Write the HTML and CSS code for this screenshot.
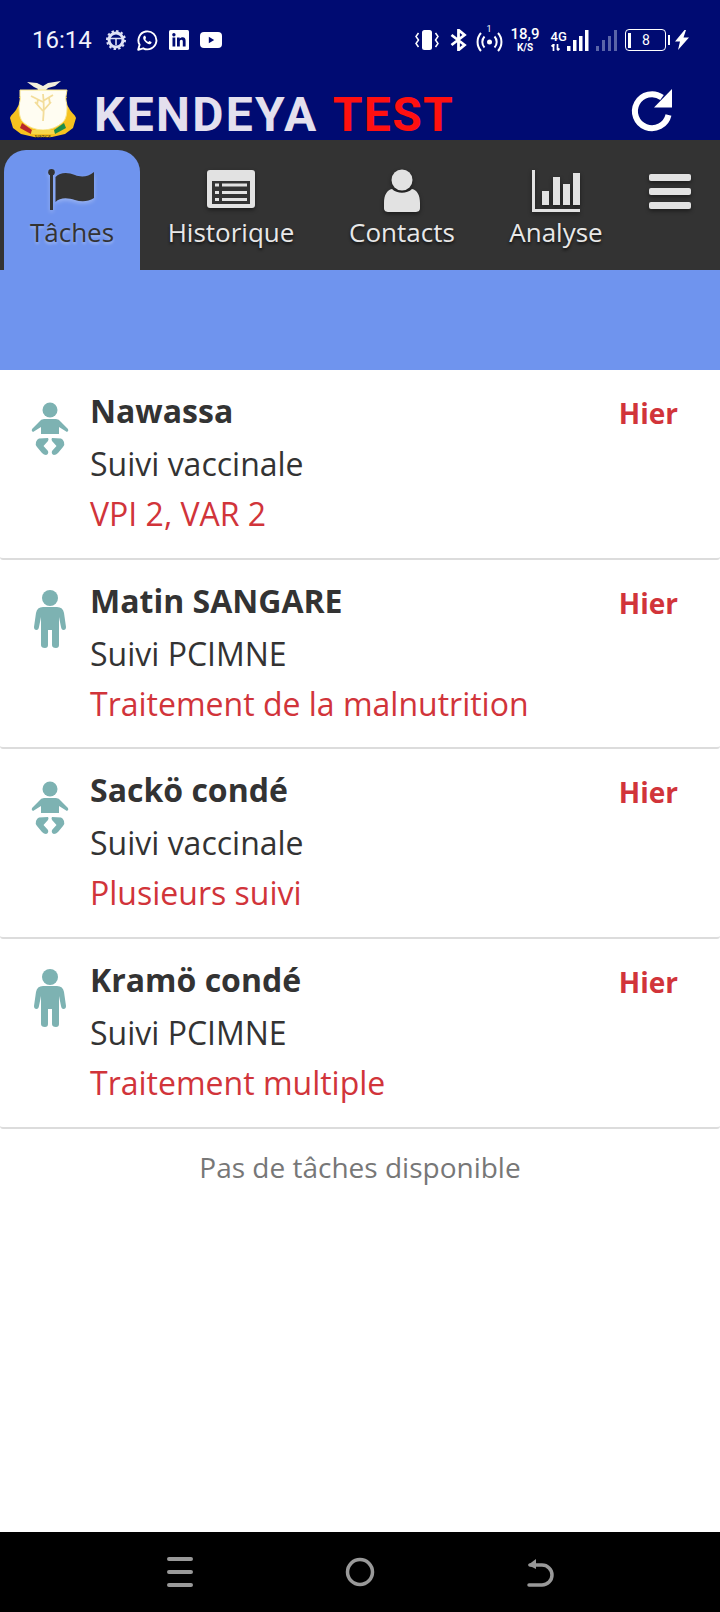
FILE: index.html
```html
<!DOCTYPE html>
<html lang="fr">
<head>
<meta charset="utf-8">
<title>Kendeya</title>
<link rel="stylesheet" href="styles.css">
</head>
<body>
<div class="app">
  <div class="status">
    <div class="status-left">
      <span class="time">16:14</span>
      <svg class="si-gear" width="20" height="20" viewBox="0 0 20 20"><circle cx="10" cy="10" r="7" fill="none" stroke="#dfe2f5" stroke-width="3"/><circle cx="10" cy="10" r="9" fill="none" stroke="#dfe2f5" stroke-width="2" stroke-dasharray="2.4 2.3"/><path d="M4 8.500h12M10 9v6" stroke="#dfe2f5" stroke-width="1.600"/></svg>
      <svg width="21" height="21" viewBox="0 0 21 21"><path d="M1.200 19.800l1.400-5a9 9 0 1 1 3.600 3.500z" fill="none" stroke="#fff" stroke-width="1.900" stroke-linejoin="round"/><path d="M7.200 5.800c-1.500 1-1.400 3 .3 5.300 1.800 2.400 4.400 3.700 6 2.900.9-.5 1.200-1.300 1-1.900l-2.200-1.100-1 1c-1.200-.3-2.600-1.700-3-3l.8-1-.9-2.200z" fill="#fff"/></svg>
      <svg width="20" height="20" viewBox="0 0 20 20"><rect width="20" height="20" rx="1.500" fill="#fff"/><path d="M3.500 7.500h2.800v9H3.500zM8 7.500h2.700v1.300c.6-1 1.700-1.500 2.900-1.500 2.300 0 3 1.500 3 3.800v5.400h-2.800v-4.800c0-1.200-.3-2-1.400-2s-1.600.8-1.600 2v4.800H8z" fill="#000b72"/><circle cx="4.900" cy="4.700" r="1.700" fill="#000b72"/></svg>
      <svg width="22" height="16" viewBox="0 0 22 16"><rect width="22" height="16" rx="4" fill="#fff"/><path d="M8.800 4.800v6.400l5.400-3.200z" fill="#000b72"/></svg>
    </div>
    <div class="status-right">
      <svg class="sr-vib" width="24" height="20" viewBox="0 0 24 20"><rect x="7" y="0" width="10" height="20" rx="2.500" fill="#fff"/><path d="M3.500 3L1 6.500l2.500 3.500L1 13.500 3.500 17M20.500 3L23 6.500 20.500 10l2.500 3.500-2.500 3.500" fill="none" stroke="#fff" stroke-width="1.500"/></svg>
      <svg class="sr-bt" width="17" height="22" viewBox="0 0 17 22"><path d="M1.500 6l13 10-6 5V1l6 5-13 10" fill="none" stroke="#fff" stroke-width="2.800"/></svg>
      <div class="sr-hs">
        <svg width="27" height="20" viewBox="0 0 27 20"><circle cx="13.500" cy="10" r="2.500" fill="#fff"/><path d="M8.500 4.500a8 8 0 0 0 0 11M18.500 4.500a8 8 0 0 1 0 11M5 1a13.500 13.500 0 0 0 0 18M22 1a13.500 13.500 0 0 1 0 18" fill="none" stroke="#fff" stroke-width="2"/></svg>
        <span class="hs-one">1</span>
      </div>
      <div class="sr-speed"><span class="sp-num">18,9</span><span class="sp-unit">K/S</span></div>
      <div class="sr-net">
        <div class="net-left"><span class="net-4g">4G</span>
          <svg width="10" height="7" viewBox="0 0 10 7"><path d="M2.500 7V1M.5 2.500L2.500.5l1 1M6.500 0v6M8.500 4.500l-2 2" fill="none" stroke="#fff" stroke-width="1.700"/></svg>
        </div>
        <svg class="bars" width="22" height="21" viewBox="0 0 22 21"><path d="M0 16h3.500v5H0zM6 10h3.500v11H6zM12 6h3.500v15H12zM18 0h3.500v21H18z" fill="#fff"/></svg>
      </div>
      <svg class="sr-sig2" width="21" height="21" viewBox="0 0 21 21"><path d="M0 16h3v5H0zM6 10h3v11H6zM12 6h3v15h-3zM18 0h3v21h-3z" fill="#5a64a8"/></svg>
      <div class="sr-batt">
        <div class="batt-body"><span class="batt-fill"></span><span class="batt-num">8</span></div>
        <span class="batt-nub"></span>
      </div>
      <svg class="sr-bolt" width="14" height="20" viewBox="0 0 14 20"><path d="M9.500 0L0 11.500h5L3 20l11-12.500H8.500L11 0z" fill="#fff"/></svg>
    </div>
  </div>

  <div class="header">
    <svg class="emblem" width="68" height="60" viewBox="0 0 68 60">
      <path d="M18 3l10 1 6 3 5-3 13-2-6 5-7 2-2 2 2 3H27l2-4-4-2z" fill="#f3efdc"/>
      <path d="M10 18c3 4 0 8-2 11-2 5-6 6-7 10l3 10 8 6 13 3h18l13-3 8-6 3-10c-1-4-5-5-7-10-2-3-5-7-2-11z" fill="#f6c21f"/>
      <path d="M11 11h47l-1 6c-1 3 1 7 1 11 0 7-1 12-4 15-5 5-13 8-20 8-7 0-15-3-20-8-3-3-4-8-4-15 0-4 2-8 1-11z" fill="#fffdf2" stroke="#f8e58a" stroke-width="1"/>
      <path d="M34 15c1 8 1 17 0 27M34 23l-12-6M34 22l10-6M34 32l-8-9M34 32l8-9M29 20l-1 6M40 19l1 6" fill="none" stroke="#f3dd9a" stroke-width="1.800"/>
      <path d="M13 44l10 7-1 4-11-6z" fill="#b8262b"/>
      <path d="M23 51h22l1 4H22z" fill="#f6d84c"/>
      <path d="M55 44l-10 7 1 4 11-6z" fill="#1d8c4a"/>
      <text class="emblem-txt" x="25" y="59">JUSTICE</text>
    </svg>
    <h1 class="brand">KENDEYA <span class="brand-test">TEST</span></h1>
    <svg class="refresh" width="48" height="48" viewBox="0 0 48 48"><path d="M34 11.500A17 17 0 1 0 40.500 29" fill="none" stroke="#fff" stroke-width="6"/><path d="M26 21.500h18V3z" fill="#fff"/></svg>
  </div>

  <nav class="tabs">
    <div class="tab tab-active tab-1">
      <svg class="tab-icon" width="50" height="44" viewBox="0 0 50 44"><rect x="2" y="3" width="3" height="38" fill="#333"/><circle cx="3.500" cy="3.300" r="3.300" fill="#333"/><path d="M7.500 8C12 3 20 3 27 6c6 2.500 13 2 19-3v26c-6 4-13 4-19 2-7-2.500-15-3-19.500 2z" fill="#333"/></svg>
      <span class="tab-label">Tâches</span>
    </div>
    <div class="tab tab-2">
      <svg class="tab-icon" width="48" height="44" viewBox="0 0 48 44"><rect x="0" y="1" width="48" height="38" rx="3" fill="#e2e2e2"/><rect x="5" y="12" width="38" height="23" fill="#333"/><path d="M8 14.500h4v3H8zM8 22h4v3H8zM8 29h4v3H8zM15 14.500h25v3H15zM15 22h25v3H15zM15 29h25v3H15z" fill="#e2e2e2"/></svg>
      <span class="tab-label">Historique</span>
    </div>
    <div class="tab tab-3">
      <svg class="tab-icon" width="36" height="44" viewBox="0 0 36 44"><circle cx="18" cy="11" r="10.500" fill="#e2e2e2"/><path d="M8 20c5 5 15 5 20 0 5 1 8 6 8 14v5c0 3-2 4-5 4H5c-3 0-5-1-5-4v-5c0-8 3-13 8-14z" fill="#e2e2e2"/></svg>
      <span class="tab-label">Contacts</span>
    </div>
    <div class="tab tab-4">
      <svg class="tab-icon" width="48" height="44" viewBox="0 0 48 44"><path d="M0 1h3v39h45v3H0zM10 22h7v14h-7zM21 8h7v28h-7zM31 15h7v21h-7zM41 4h7v32h-7z" fill="#e2e2e2"/></svg>
      <span class="tab-label">Analyse</span>
    </div>
    <div class="tab tab-5">
      <div class="burger"><span></span><span></span><span></span></div>
    </div>
  </nav>

  <div class="band"></div>

  <main class="list">
    <article class="item">
      <div class="item-icon">
        <svg width="40" height="60" viewBox="0 0 40 60"><circle cx="20" cy="10" r="7.500" fill="#7db2b2"/><path d="M14 19h12q3 0 5 3l7 7q1 2-1 3l-8-5v7H11v-7l-8 5q-2-1-1-3l7-7q2-3 5-3z" fill="#7db2b2"/><path class="baby-leg" d="M9 38.500l9-.5q1 1 0 3l-4.500 5 4.500 5q1 3-2 4-2 0-4-2l-5-6q-2-2-1-5 1-3 3-3.500zM31 38.500l-9-.5q-1 1 0 3l4.500 5-4.500 5q-1 3 2 4 2 0 4-2l5-6q2-2 1-5-1-3-3-3.500z" fill="#7db2b2"/></svg>
      </div>
      <div class="item-body">
        <div class="item-name">Nawassa</div>
        <div class="item-sub">Suivi vaccinale</div>
        <div class="item-detail">VPI 2, VAR 2</div>
      </div>
      <div class="item-when">Hier</div>
    </article>
    <article class="item">
      <div class="item-icon">
        <svg width="40" height="60" viewBox="0 0 40 60"><circle cx="20" cy="8" r="8" fill="#7db2b2"/><path d="M13 17h14q6 0 7 6l2 14q0 3-2.500 3-2 0-2.500-3l-2-10v28q0 3-3 3-4 0-4-3V40h-4v15q0 3-3 3-4 0-4-3V27L9 37q-.5 3-2.500 3Q4 40 4 37l2-14q1-6 7-6z" fill="#7db2b2"/></svg>
      </div>
      <div class="item-body">
        <div class="item-name">Matin SANGARE</div>
        <div class="item-sub">Suivi PCIMNE</div>
        <div class="item-detail">Traitement de la malnutrition</div>
      </div>
      <div class="item-when">Hier</div>
    </article>
    <article class="item">
      <div class="item-icon">
        <svg width="40" height="60" viewBox="0 0 40 60"><circle cx="20" cy="10" r="7.500" fill="#7db2b2"/><path d="M14 19h12q3 0 5 3l7 7q1 2-1 3l-8-5v7H11v-7l-8 5q-2-1-1-3l7-7q2-3 5-3z" fill="#7db2b2"/><path class="baby-leg" d="M9 38.500l9-.5q1 1 0 3l-4.500 5 4.500 5q1 3-2 4-2 0-4-2l-5-6q-2-2-1-5 1-3 3-3.500zM31 38.500l-9-.5q-1 1 0 3l4.500 5-4.500 5q-1 3 2 4 2 0 4-2l5-6q2-2 1-5-1-3-3-3.500z" fill="#7db2b2"/></svg>
      </div>
      <div class="item-body">
        <div class="item-name">Sackö condé</div>
        <div class="item-sub">Suivi vaccinale</div>
        <div class="item-detail">Plusieurs suivi</div>
      </div>
      <div class="item-when">Hier</div>
    </article>
    <article class="item">
      <div class="item-icon">
        <svg width="40" height="60" viewBox="0 0 40 60"><circle cx="20" cy="8" r="8" fill="#7db2b2"/><path d="M13 17h14q6 0 7 6l2 14q0 3-2.500 3-2 0-2.500-3l-2-10v28q0 3-3 3-4 0-4-3V40h-4v15q0 3-3 3-4 0-4-3V27L9 37q-.5 3-2.500 3Q4 40 4 37l2-14q1-6 7-6z" fill="#7db2b2"/></svg>
      </div>
      <div class="item-body">
        <div class="item-name">Kramö condé</div>
        <div class="item-sub">Suivi PCIMNE</div>
        <div class="item-detail">Traitement multiple</div>
      </div>
      <div class="item-when">Hier</div>
    </article>
    <p class="empty">Pas de tâches disponible</p>
  </main>

  <footer class="navbar">
    <div class="nav-slot"><svg width="30" height="32" viewBox="0 0 30 32"><path d="M4 3h22M4 16h22M4 29h22" stroke="#999" stroke-width="4" stroke-linecap="round"/></svg></div>
    <div class="nav-slot"><svg width="32" height="32" viewBox="0 0 32 32"><circle cx="16" cy="16" r="12.500" fill="none" stroke="#999" stroke-width="3.500"/></svg></div>
    <div class="nav-slot"><svg width="32" height="32" viewBox="0 0 32 32"><path d="M5 29h13a9.500 9.500 0 0 0 0-20H6" fill="none" stroke="#999" stroke-width="3.500" stroke-linecap="round"/><path d="M12 3L4 9l8 4z" fill="#999"/></svg></div>
  </footer>
</div>
</body>
</html>
```

FILE: styles.css
```css
* { box-sizing: border-box; }
html, body { margin: 0; padding: 0; background: #fff; }
.app {
  width: 720px; height: 1612px; display: flex; flex-direction: column;
  font-family: "Open Sans", "Noto Sans", sans-serif; overflow: hidden;
}
.status {
  height: 80px; flex: none; background: #000b72; color: #fff;
  display: flex; align-items: center; justify-content: space-between;
  padding: 0 31px 0 32px; font-family: Roboto, sans-serif;
}
.status-left, .status-right { display: flex; align-items: center; }
.status-left { gap: 11px; }
.time { font-size: 24px; color: #f1f2fa; width: 63px; }
.sr-vib { margin-right: 11px; }
.sr-bt { margin-right: 9px; }
.sr-hs { position: relative; width: 27px; height: 20px; margin-right: 9px; margin-top: 3px; }
.sr-hs svg { display: block; }
.hs-one { position: absolute; top: -7px; left: 11px; font-size: 9px; line-height: 9px; }
.sr-speed { display: flex; flex-direction: column; align-items: center; width: 27px; margin-right: 12px; }
.sp-num { font-size: 15px; line-height: 15px; font-weight: 500; white-space: nowrap; }
.sp-unit { font-size: 10px; line-height: 10px; font-weight: 700; margin-top: 1px; }
.sr-net { display: flex; align-items: flex-end; width: 38px; margin-right: 7px; }
.net-left { display: flex; flex-direction: column; align-items: flex-start; width: 16px; }
.net-4g { font-size: 13px; line-height: 13px; font-weight: 500; }
.net-left svg { display: block; margin-top: 1px; }
.sr-sig2 { margin-right: 8px; }
.sr-batt { display: flex; align-items: center; margin-right: 5px; }
.batt-body {
  width: 41px; height: 22px; border: 1.500px solid #fff; border-radius: 4px;
  display: flex; align-items: center; padding-left: 2px; position: relative;
}
.batt-fill { width: 3px; height: 15px; background: #fff; }
.batt-num { flex: 1; text-align: center; font-size: 14px; line-height: 16px; padding-right: 3px; }
.batt-nub { width: 2.500px; height: 10px; background: #fff; margin-left: 2px; }

.header {
  height: 60px; flex: none; background: #000b72; position: relative;
  display: flex; align-items: center; padding-left: 9px;
}
.emblem { flex: none; margin-top: -2px; }
.emblem-txt { font-size: 4px; fill: #5a4a10; font-family: "Liberation Sans", sans-serif; font-weight: 700; }
.brand {
  margin: 10px 0 0 17px; font-family: Roboto, sans-serif; font-weight: 700;
  font-size: 48px; line-height: 50px; color: #e4e0ee; white-space: nowrap; letter-spacing: 2.300px;
}
.brand-test { color: #ff1010; letter-spacing: 1.300px; }
.refresh { position: absolute; right: 44px; top: 6px; }

.tabs {
  height: 130px; flex: none; background: #333; display: flex;
  padding: 10px 0 0 4px;
}
.tab {
  flex: none; height: 120px; display: flex; flex-direction: column; align-items: center;
  padding-top: 19px;
}
.tab-active { background: #6f94ee; border-radius: 22px 22px 0 0; }
.tab-1 { width: 136px; padding-left: 2px; }
.tab-2 { width: 182px; }
.tab-3 { width: 160px; }
.tab-4 { width: 148px; }
.tab-5 { width: 80px; }
.tab-icon { display: block; filter: drop-shadow(0 2px 2px rgba(0,0,0,.45)); }
.tab-active .tab-icon { filter: drop-shadow(0 2px 2px rgba(255,255,255,.3)); }
.tab-label {
  font-size: 26px; line-height: 36px; margin-top: 1px; color: #e8e8e8;
  text-shadow: 0 2px 3px #111;
}
.tab-active .tab-label { color: #333; text-shadow: 0 2px 3px rgba(255,255,255,.35); margin-left: -2px; }
.burger { display: flex; flex-direction: column; gap: 7px; width: 42px; margin-top: 5px; filter: drop-shadow(0 2px 2px rgba(0,0,0,.45)); }
.burger span { height: 7px; background: #e2e2e2; border-radius: 2px; }

.band { height: 100px; flex: none; background: #6f94ee; }

.list { flex: 1; background: #fff; }
.item {
  height: 189.700px; display: flex; align-items: flex-start; border-bottom: 2px solid #dcdcdc;
  padding-top: 16px; border-radius: 0 0 3px 3px;
}
.item-icon { width: 90px; flex: none; padding: 14px 0 0 30px; }
.item-icon svg { display: block; }
.item-body { flex: 1; min-width: 0; }
.item-name { font-size: 32px; line-height: 50px; margin-bottom: 3px; font-weight: 700; color: #333; }
.item-sub { font-size: 32px; line-height: 50px; color: #333; }
.item-detail { font-size: 32px; line-height: 50px; color: #d1343a; }
.item-when { font-size: 28px; line-height: 50px; margin-top: 2px; font-weight: 700; color: #d1343a; padding-right: 42px; }
.empty { margin: 0; padding-top: 14px; text-align: center; font-size: 28px; line-height: 48px; color: #777; }

.navbar { height: 80px; flex: none; background: #000; display: flex; justify-content: center; align-items: center; }
.nav-slot { width: 180px; display: flex; justify-content: center; }
.nav-slot svg { display: block; }
```
